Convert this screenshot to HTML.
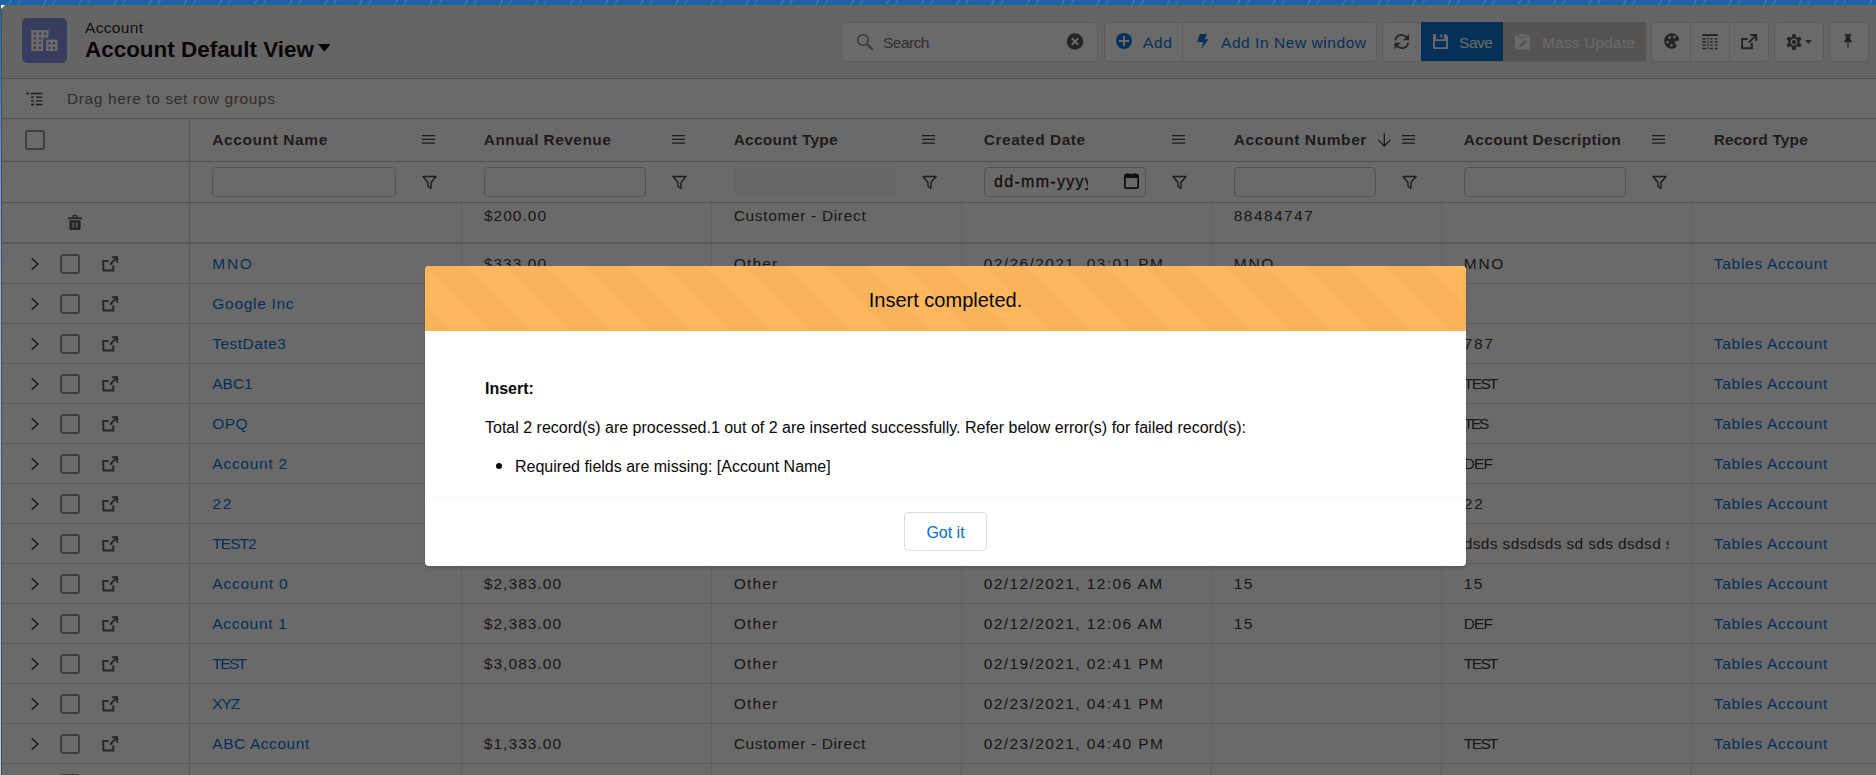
<!DOCTYPE html><html><head><meta charset="utf-8"><title>Account</title><style>*{box-sizing:border-box;margin:0;padding:0}
html,body{width:1876px;height:775px;overflow:hidden;background:#fff;font-family:"Liberation Sans",sans-serif;font-size:16px;color:#080707}
body{position:relative}
.abs{position:absolute}
#lstrip{position:absolute;left:0;top:0;width:2px;height:775px;background:linear-gradient(to bottom,#1e62a6 0,#3b78ba 70px,#6f95cc 160px,#9ab1dc 300px,#adc0e6 500px,#b5c5ea 775px)}
#strip{position:absolute;left:0;top:0;width:1876px;height:6px;background:#1e62a6 repeating-linear-gradient(118deg,rgba(255,255,255,0) 0 9px,rgba(255,255,255,.13) 9px 10.500px,rgba(255,255,255,0) 10.500px 17px,rgba(255,255,255,.09) 17px 18.500px,rgba(255,255,255,0) 18.500px 31px)}
#page{position:absolute;left:1px;top:5px;width:1875px;height:770px;border-left:1px solid #b9b5b1;background:#fff;overflow:hidden}
#hdbg{position:absolute;left:0;top:0;width:1876px;height:78px;background:#f3f2f2}
#dim{position:absolute;left:1px;top:5px;width:1875px;height:770px;background:rgba(8,7,7,.6)}
/* all children positioned in page coordinates via wrapper */
#wrap{position:absolute;left:-2px;top:-5px;width:1876px;height:775px}
.hl{position:absolute;left:0;width:1876px;height:1px;background:#bcc2d2}
#icon{position:absolute;left:22px;top:18px;width:45px;height:45px;border-radius:5px;background:#7f8de1}
#t1{position:absolute;left:85px;top:18px;font-size:16px;line-height:18px;color:#3e3e3c;white-space:nowrap}
#t2{position:absolute;left:85px;top:36px;font-size:22.4px;line-height:26px;font-weight:700;color:#080707;white-space:nowrap}
.btn{position:absolute;top:22px;height:40px;border:1px solid #dddbda;background:#fff;border-radius:4px}
.btxt{position:absolute;top:33px;font-size:16px;line-height:18px;color:#0070d2;white-space:nowrap}
.cb{position:absolute;width:20px;height:20px;border:2px solid #969492;border-radius:3px;background:#fff}
.hd{position:absolute;top:130px;font-weight:700;font-size:16px;line-height:18px;color:#3e3e3c;white-space:nowrap;letter-spacing:.25px}
.menu{position:absolute;top:134px;width:13px;height:11px}
.fin{position:absolute;top:167px;height:30px;border:1px solid #c9c9c9;border-radius:4px;background:#fff}
.fic{position:absolute;top:174.800px;width:15px;height:15px}
.row{position:absolute;left:0;width:1876px;height:40px;border-bottom:1px solid #d6dae6}
.chev{position:absolute;left:30.500px;top:14px;width:8px;height:12px}
.rcb{left:60px;top:10px}
.ext{position:absolute;left:101.500px;top:11.500px;width:17px;height:16px}
.cell{position:absolute;top:10.500px;font-size:15.500px;line-height:18px;white-space:nowrap;overflow:hidden;color:#333}
.tx{position:absolute;line-height:18px;white-space:nowrap}
.cell.lnk{color:#0070d2}
.vsep{position:absolute;top:203px;width:0;height:580px;border-left:1px dotted #d0d0d0}
.vsolid{position:absolute;left:189px;top:119px;width:1px;height:660px;background:#cfcfcf}
/* modal */
#modal{position:absolute;left:425px;top:266px;width:1041px;height:300px;background:#fff;border-radius:4px;overflow:hidden;box-shadow:0 2px 3px rgba(0,0,0,.16)}
#mh{position:absolute;left:0;top:0;width:100%;height:65px;background-color:#ffb75d;background-image:linear-gradient(45deg,rgba(0,0,0,.025) 25%,transparent 25%,transparent 50%,rgba(0,0,0,.025) 50%,rgba(0,0,0,.025) 75%,transparent 75%,transparent);background-size:80px 80px;text-align:center;font-size:20px;line-height:65px;padding-top:2px;color:#080707}
.mt{position:absolute;left:60px;margin-top:1px;font-size:16px;line-height:20px;color:#080707;white-space:nowrap}
#gotit{position:absolute;left:479px;top:246px;width:83px;height:39px;padding-top:2px;border:1px solid #dddbda;border-radius:4px;background:#fff;color:#0070d2;font-size:16px;line-height:35px;text-align:center}
</style></head><body>
<div id="lstrip"></div><div id="strip"></div>
<div id="page"><div id="wrap">
<!-- header --><div id="hdbg"></div>
<div id="icon"><svg viewBox="0 0 45 45" width="45" height="45"><path d="M9.300 12h17.200v7.700h-5.300V33H9.300z M24 21.800h11.600V33H24z" fill="#fff"/><g fill="#7f8de1"><circle cx="12.900" cy="15.600" r="1.250"/><circle cx="18" cy="15.600" r="1.250"/><circle cx="23" cy="15.600" r="1.250"/><circle cx="12.900" cy="20.400" r="1.250"/><circle cx="18" cy="20.400" r="1.250"/><circle cx="12.900" cy="24.900" r="1.250"/><circle cx="18" cy="24.900" r="1.250"/><circle cx="12.900" cy="29.700" r="1.250"/><circle cx="18" cy="29.700" r="1.250"/><circle cx="27.400" cy="25.200" r="1.250"/><circle cx="31.900" cy="25.200" r="1.250"/><circle cx="27.400" cy="30" r="1.250"/><circle cx="31.900" cy="30" r="1.250"/></g></svg></div>
<div class="tx" style="left:85px;top:19px;font-size:15.5px;font-weight:400;color:#181818;letter-spacing:0.331px">Account</div>
<div class="tx" style="left:85px;top:41px;font-size:22.4px;font-weight:700;color:#080707;letter-spacing:0.025px">Account Default View</div>
<svg class="abs" style="left:317.500px;top:44.300px" width="12.800" height="7.800" viewBox="0 0 12.800 7.800"><path d="M0 0h12.800L6.400 7.800z" fill="#080707"/></svg>
<!-- search -->
<div class="btn" style="left:841px;width:257px"></div>
<svg class="abs" style="left:856px;top:33px" width="18" height="18" viewBox="0 0 18 18"><circle cx="7" cy="7" r="5.3" fill="none" stroke="#8a8886" stroke-width="1.5"/><path d="M11 11l5.5 5.5" stroke="#8a8886" stroke-width="1.8"/></svg>
<div class="tx" style="left:883px;top:34px;font-size:15.5px;font-weight:400;color:#706e6b;letter-spacing:-0.525px">Search</div>
<svg class="abs" style="left:1066px;top:33px" width="18" height="18" viewBox="0 0 18 18"><circle cx="9" cy="8.500" r="8.200" fill="#54534f"/><path d="M5.800 5.300l6.400 6.400M12.200 5.300l-6.400 6.400" stroke="#fff" stroke-width="2"/></svg>
<!-- add group -->
<div class="btn" style="left:1104px;width:273px"></div>
<div class="abs" style="left:1182px;top:22px;width:1px;height:40px;background:#dddbda"></div>
<svg class="abs" style="left:1115px;top:32.300px" width="18" height="18" viewBox="0 0 18 18"><circle cx="9" cy="9" r="8" fill="#0070d2"/><path d="M9 3.800v10.400M3.800 9h10.400" stroke="#fff" stroke-width="1.900"/></svg>
<div class="tx" style="left:1143px;top:34px;font-size:15.5px;font-weight:400;color:#0070d2;letter-spacing:0.703px">Add</div>
<svg class="abs" style="left:1197px;top:34px" width="12" height="15" viewBox="0 0 12 15"><path d="M2.800 0h7.200L7.600 5.200H11.500L4.300 15l2-7H.200z" fill="#0070d2"/></svg>
<div class="tx" style="left:1221px;top:34px;font-size:15.5px;font-weight:400;color:#0070d2;letter-spacing:0.555px">Add In New window</div>
<!-- refresh/save/mass -->
<div class="btn" style="left:1382px;width:265px"></div>
<svg class="abs" style="left:1394px;top:34px" width="16" height="15" viewBox="0 0 16 15"><path d="M1.300 6.300A6.300 6.300 0 0 1 12.700 3.600M14.300 8.700A6.300 6.300 0 0 1 2.900 11.400" fill="none" stroke="#54534f" stroke-width="1.750"/><path d="M15.100 .1v6.200H8.900zM.5 14.900V8.700h6.200z" fill="#54534f"/></svg>
<div class="abs" style="left:1421px;top:22px;width:82px;height:39px;background:#0070d2"></div>
<svg class="abs" style="left:1433px;top:34px" width="15" height="15" viewBox="0 0 15 15"><path fill-rule="evenodd" fill="#fff" d="M1.300 0H12.800L15 2.200V13.700A1.300 1.300 0 0 1 13.700 15H1.300A1.300 1.300 0 0 1 0 13.700V1.300A1.300 1.300 0 0 1 1.300 0z M3.100 -.2V5.200H11V-.2z M1.900 7V13.200H13.100V7z"/><rect x="7.300" y=".5" width="2" height="3" fill="#fff"/></svg>
<div class="tx" style="left:1459px;top:34px;font-size:15.5px;font-weight:400;color:#ffffff;letter-spacing:-0.448px">Save</div>
<div class="abs" style="left:1503px;top:22px;width:143px;height:39px;background:#c9c7c5"></div>
<svg class="abs" style="left:1515px;top:33.800px" width="15" height="16" viewBox="0 0 15 16"><rect x="0" y="1.300" width="14.700" height="14.300" rx="1.300" fill="#fff"/><rect x="3.500" y="-.3" width="7.700" height="3.800" rx="1.500" fill="#fff" stroke="#c9c7c5" stroke-width="1"/><path d="M3.900 13.600l.7-2.600 5.300-5.100 1.900 1.900-5.300 5.100z" fill="#c9c7c5"/></svg>
<div class="tx" style="left:1542px;top:34px;font-size:15.5px;font-weight:400;color:#ffffff;letter-spacing:0.167px">Mass Update</div>
<!-- icon group -->
<div class="btn" style="left:1651px;width:118px"></div>
<div class="abs" style="left:1690px;top:22px;width:1px;height:40px;background:#dddbda"></div>
<div class="abs" style="left:1729px;top:22px;width:1px;height:40px;background:#dddbda"></div>
<svg class="abs" style="left:1663.600px;top:33.400px" width="16" height="16" viewBox="0 0 16 16"><path d="M7.800 .3A7.700 7.700 0 0 0 7.800 15.700C10 15.700 11.600 15 12.800 13.300C13.600 12 10.500 11.300 10.700 9.400C10.900 7.700 13.200 8.400 15.400 7.300A7.700 7.700 0 0 0 7.800 .3z" fill="#54534f"/><g fill="#fff"><circle cx="5.600" cy="4.400" r="1.350"/><circle cx="10.400" cy="3.800" r="1.350"/><circle cx="3.500" cy="9.100" r="1.350"/><circle cx="7.500" cy="12.300" r="1.350"/></g></svg>
<svg class="abs" style="left:1702px;top:33.800px" width="16" height="16" viewBox="0 0 16 16"><path d="M.2 .1h15.600v1.900H.2z" fill="#54534f"/><path d="M.3 4.800h4M7.900 4.800h2.800M12.700 4.800h2.800M.3 8h4M7.900 8h2.800M12.700 8h2.800M.3 11.200h4M7.900 11.200h2.800M12.700 11.200h2.800M.3 14.500h4M7.900 14.500h2.800M12.700 14.500h2.800" stroke="#54534f" stroke-width="1.300"/><path d="M6.100 2.500V15.200" stroke="#54534f" stroke-width=".8"/></svg>
<svg class="abs" style="left:1740.800px;top:33.800px" width="17" height="16" viewBox="0 0 17 16"><path d="M6.800 5H1.100v9.300h9.700V8.700" fill="none" stroke="#54534f" stroke-width="2"/><path d="M9.300 1.100h5.900V7M15.200 1.100L7.700 8.600" fill="none" stroke="#54534f" stroke-width="2"/></svg>
<div class="btn" style="left:1774px;width:50px"></div>
<svg class="abs" style="left:1786px;top:33.500px" width="16" height="16" viewBox="0 0 16 16"><g transform="translate(8 8)"><g fill="#54534f"><rect x="-1.900" y="-7.900" width="3.800" height="15.800" rx="1" transform="rotate(0)"/><rect x="-1.900" y="-7.900" width="3.800" height="15.800" rx="1" transform="rotate(60)"/><rect x="-1.900" y="-7.900" width="3.800" height="15.800" rx="1" transform="rotate(120)"/><circle r="5.700"/></g><circle r="2.800" fill="none" stroke="#fff" stroke-width="1.300"/></g></svg>
<svg class="abs" style="left:1804.600px;top:40px" width="7" height="4" viewBox="0 0 7 4"><path d="M0 0h7L3.500 4z" fill="#54534f"/></svg>
<div class="btn" style="left:1829px;width:40px"></div>
<svg class="abs" style="left:1844.100px;top:34.200px" width="8" height="14" viewBox="0 0 8 14"><rect x=".9" y="0" width="6.200" height="1.800" rx=".6" fill="#54534f"/><path d="M1.700 1.500h4.600l.2 4.200c.9.500 1.500 1.300 1.500 2.500H0c0-1.200.6-2 1.500-2.500z" fill="#54534f"/><path d="M3.350 8h1.300v5l-.65 1-.65-1z" fill="#54534f"/></svg>
<div class="hl" style="top:78px;background:#c2c2c2;height:1px"></div>
<!-- group bar -->
<svg class="abs" style="left:26px;top:92px" width="17" height="14" viewBox="0 0 17 14"><path d="M0 1.500h3M5 1.500h11.300M5 5.100h3M10 5.100h6.300M5 8.800h3M10 8.800h6.300M5 12.500h3M10 12.500h6.300" stroke="#3a3a3a" stroke-width="1.300"/></svg>
<div class="tx" style="left:67px;top:89.5px;font-size:15.5px;font-weight:400;color:#6b6b6b;letter-spacing:0.611px">Drag here to set row groups</div>
<div class="hl" style="top:118px"></div>
<!-- col header -->
<span class="cb" style="left:25px;top:130px"></span>
<div class="tx" style="left:212.3px;top:130.5px;font-size:15.5px;font-weight:700;color:#3e3e3c;letter-spacing:0.588px">Account Name</div>
<div class="tx" style="left:483.8px;top:130.5px;font-size:15.5px;font-weight:700;color:#3e3e3c;letter-spacing:0.427px">Annual Revenue</div>
<div class="tx" style="left:733.7px;top:130.5px;font-size:15.5px;font-weight:700;color:#3e3e3c;letter-spacing:0.241px">Account Type</div>
<div class="tx" style="left:983.7px;top:130.5px;font-size:15.5px;font-weight:700;color:#3e3e3c;letter-spacing:0.534px">Created Date</div>
<div class="tx" style="left:1233.8px;top:130.5px;font-size:15.5px;font-weight:700;color:#3e3e3c;letter-spacing:0.594px">Account Number</div>
<div class="tx" style="left:1463.8px;top:130.5px;font-size:15.5px;font-weight:700;color:#3e3e3c;letter-spacing:0.301px">Account Description</div>
<div class="tx" style="left:1713.8px;top:130.5px;font-size:15.5px;font-weight:700;color:#3e3e3c;letter-spacing:0.125px">Record Type</div>
<svg class="abs" style="left:1377px;top:133px" width="14" height="14" viewBox="0 0 14 14"><path d="M7.300 .4V13M1.100 6.600L7.300 13l6.300-6.400" fill="none" stroke="#3a3a3a" stroke-width="1.300"/></svg>
<svg class="menu" style="left:422px" viewBox="0 0 13 11"><path d="M0 1.500h13M0 5.400h13M0 9.200h13" stroke="#3a3a3a" stroke-width="1.250"/></svg>
<svg class="menu" style="left:672px" viewBox="0 0 13 11"><path d="M0 1.500h13M0 5.400h13M0 9.200h13" stroke="#3a3a3a" stroke-width="1.250"/></svg>
<svg class="menu" style="left:922px" viewBox="0 0 13 11"><path d="M0 1.500h13M0 5.400h13M0 9.200h13" stroke="#3a3a3a" stroke-width="1.250"/></svg>
<svg class="menu" style="left:1172px" viewBox="0 0 13 11"><path d="M0 1.500h13M0 5.400h13M0 9.200h13" stroke="#3a3a3a" stroke-width="1.250"/></svg>
<svg class="menu" style="left:1402px" viewBox="0 0 13 11"><path d="M0 1.500h13M0 5.400h13M0 9.200h13" stroke="#3a3a3a" stroke-width="1.250"/></svg>
<svg class="menu" style="left:1652px" viewBox="0 0 13 11"><path d="M0 1.500h13M0 5.400h13M0 9.200h13" stroke="#3a3a3a" stroke-width="1.250"/></svg>
<div class="hl" style="top:161px"></div>
<!-- filter row -->
<div class="fin" style="left:212px;width:184px"></div>
<div class="fin" style="left:484px;width:162px"></div>
<div class="fin" style="left:734px;width:162px;background:#f4f4f4;border-color:#fbfbfb"></div>
<div class="fin" style="left:984px;width:162px"></div>
<div class="abs" style="left:994px;top:173px;font-size:16px;line-height:18px;color:#1c1c1c;-webkit-text-stroke:.3px #1c1c1c;letter-spacing:1.300px;width:94px;overflow:hidden;white-space:nowrap">dd-mm-yyyy</div>
<svg class="abs" style="left:1124px;top:172.800px" width="15" height="16" viewBox="0 0 15 16"><rect x=".9" y="1.700" width="13.200" height="13.400" rx="1.200" fill="none" stroke="#222" stroke-width="1.800"/><path d="M.9 1.700h13.200v3.300H.9z" fill="#222"/><path d="M3.700 .2v2M11.300 .2v2" stroke="#222" stroke-width="1.800"/></svg>
<div class="fin" style="left:1234px;width:142px"></div>
<div class="fin" style="left:1464px;width:162px"></div>
<svg class="fic" style="left:422px" viewBox="0 0 15 15"><path d="M1 1.500h13L9 7.500v6l-3-2v-4z" fill="none" stroke="#3e3e3c" stroke-width="1.400" stroke-linejoin="round"/></svg>
<svg class="fic" style="left:672px" viewBox="0 0 15 15"><path d="M1 1.500h13L9 7.500v6l-3-2v-4z" fill="none" stroke="#3e3e3c" stroke-width="1.400" stroke-linejoin="round"/></svg>
<svg class="fic" style="left:922px" viewBox="0 0 15 15"><path d="M1 1.500h13L9 7.500v6l-3-2v-4z" fill="none" stroke="#3e3e3c" stroke-width="1.400" stroke-linejoin="round"/></svg>
<svg class="fic" style="left:1172px" viewBox="0 0 15 15"><path d="M1 1.500h13L9 7.500v6l-3-2v-4z" fill="none" stroke="#3e3e3c" stroke-width="1.400" stroke-linejoin="round"/></svg>
<svg class="fic" style="left:1402px" viewBox="0 0 15 15"><path d="M1 1.500h13L9 7.500v6l-3-2v-4z" fill="none" stroke="#3e3e3c" stroke-width="1.400" stroke-linejoin="round"/></svg>
<svg class="fic" style="left:1652px" viewBox="0 0 15 15"><path d="M1 1.500h13L9 7.500v6l-3-2v-4z" fill="none" stroke="#3e3e3c" stroke-width="1.400" stroke-linejoin="round"/></svg>
<div class="hl" style="top:202px"></div>
<!-- pinned row -->
<svg class="abs" style="left:68px;top:215px" width="14" height="15" viewBox="0 0 14 15"><path d="M5 2.500V1.300a.6.600 0 0 1 .6-.6h2.800a.6.600 0 0 1 .6.600v1.200" fill="none" stroke="#54534f" stroke-width="1.300"/><path d="M0 2.300h14v1.900H0z" fill="#54534f"/><path d="M1.400 5.300h11.200v8.300a1.300 1.300 0 0 1-1.300 1.300H2.700a1.300 1.300 0 0 1-1.300-1.300z" fill="#54534f"/><path d="M5.200 7.500v5M8.800 7.500v5" stroke="#fff" stroke-width="1.300"/></svg>
<div class="tx" style="left:484px;top:206.5px;font-size:15.5px;font-weight:400;color:#333333;letter-spacing:0.995px">$200.00</div>
<div class="tx" style="left:733.7px;top:206.5px;font-size:15.5px;font-weight:400;color:#333333;letter-spacing:0.66px">Customer - Direct</div>
<div class="tx" style="left:1233.8px;top:206.5px;font-size:15.5px;font-weight:400;color:#333333;letter-spacing:1.433px">88484747</div>
<div class="hl" style="top:242px;height:2px;background:#cbd2e2"></div>

<div id="rows">
<div class="row" style="top:244px">
<svg class="chev" viewBox="0 0 8 12"><path d="M.7 .5l6.300 5.500-6.300 5.500" fill="none" stroke="#2e2e2e" stroke-width="1.400"/></svg>
<span class="cb rcb"></span>
<svg class="ext" viewBox="0 0 17 16"><path d="M6.700 5H1.300v9.600h10V9.300" fill="none" stroke="#5c5b59" stroke-width="2"/><path d="M9.800 1.300h5.300V6.800M15.100 1.300L8.200 8.500" fill="none" stroke="#5c5b59" stroke-width="2"/></svg>
<span class="cell lnk" style="left:212.3px;width:226.7px;letter-spacing:1.714px">MNO</span>
<span class="cell" style="left:483.8px;width:205.2px;letter-spacing:1.041px">$333.00</span>
<span class="cell" style="left:733.7px;width:205.29999999999995px;letter-spacing:1.184px">Other</span>
<span class="cell" style="left:983.7px;width:205.29999999999995px;letter-spacing:1.411px">02/26/2021, 03:01 PM</span>
<span class="cell" style="left:1233.8px;width:185.20000000000005px;letter-spacing:1.714px">MNO</span>
<span class="cell" style="left:1463.8px;width:205.20000000000005px;letter-spacing:1.714px">MNO</span>
<span class="cell lnk" style="left:1713.8px;width:205.20000000000005px;letter-spacing:0.71px">Tables Account</span>
</div>
<div class="row" style="top:284px">
<svg class="chev" viewBox="0 0 8 12"><path d="M.7 .5l6.300 5.500-6.300 5.500" fill="none" stroke="#2e2e2e" stroke-width="1.400"/></svg>
<span class="cb rcb"></span>
<svg class="ext" viewBox="0 0 17 16"><path d="M6.700 5H1.300v9.600h10V9.300" fill="none" stroke="#5c5b59" stroke-width="2"/><path d="M9.800 1.300h5.300V6.800M15.100 1.300L8.200 8.500" fill="none" stroke="#5c5b59" stroke-width="2"/></svg>
<span class="cell lnk" style="left:212.3px;width:226.7px;letter-spacing:0.703px">Google Inc</span>
</div>
<div class="row" style="top:324px">
<svg class="chev" viewBox="0 0 8 12"><path d="M.7 .5l6.300 5.500-6.300 5.500" fill="none" stroke="#2e2e2e" stroke-width="1.400"/></svg>
<span class="cb rcb"></span>
<svg class="ext" viewBox="0 0 17 16"><path d="M6.700 5H1.300v9.600h10V9.300" fill="none" stroke="#5c5b59" stroke-width="2"/><path d="M9.800 1.300h5.300V6.800M15.100 1.300L8.200 8.500" fill="none" stroke="#5c5b59" stroke-width="2"/></svg>
<span class="cell lnk" style="left:212.3px;width:226.7px;letter-spacing:0.475px">TestDate3</span>
<span class="cell" style="left:1463.8px;width:205.20000000000005px;letter-spacing:1.562px">787</span>
<span class="cell lnk" style="left:1713.8px;width:205.20000000000005px;letter-spacing:0.71px">Tables Account</span>
</div>
<div class="row" style="top:364px">
<svg class="chev" viewBox="0 0 8 12"><path d="M.7 .5l6.300 5.500-6.300 5.500" fill="none" stroke="#2e2e2e" stroke-width="1.400"/></svg>
<span class="cb rcb"></span>
<svg class="ext" viewBox="0 0 17 16"><path d="M6.700 5H1.300v9.600h10V9.300" fill="none" stroke="#5c5b59" stroke-width="2"/><path d="M9.800 1.300h5.300V6.800M15.100 1.300L8.200 8.500" fill="none" stroke="#5c5b59" stroke-width="2"/></svg>
<span class="cell lnk" style="left:212.3px;width:226.7px;letter-spacing:-0.033px">ABC1</span>
<span class="cell" style="left:1463.8px;width:205.20000000000005px;letter-spacing:-1.608px">TEST</span>
<span class="cell lnk" style="left:1713.8px;width:205.20000000000005px;letter-spacing:0.71px">Tables Account</span>
</div>
<div class="row" style="top:404px">
<svg class="chev" viewBox="0 0 8 12"><path d="M.7 .5l6.300 5.500-6.300 5.500" fill="none" stroke="#2e2e2e" stroke-width="1.400"/></svg>
<span class="cb rcb"></span>
<svg class="ext" viewBox="0 0 17 16"><path d="M6.700 5H1.300v9.600h10V9.300" fill="none" stroke="#5c5b59" stroke-width="2"/><path d="M9.800 1.300h5.300V6.800M15.100 1.300L8.200 8.500" fill="none" stroke="#5c5b59" stroke-width="2"/></svg>
<span class="cell lnk" style="left:212.3px;width:226.7px;letter-spacing:0.423px">OPQ</span>
<span class="cell" style="left:1463.8px;width:205.20000000000005px;letter-spacing:-2.328px">TES</span>
<span class="cell lnk" style="left:1713.8px;width:205.20000000000005px;letter-spacing:0.71px">Tables Account</span>
</div>
<div class="row" style="top:444px">
<svg class="chev" viewBox="0 0 8 12"><path d="M.7 .5l6.300 5.500-6.300 5.500" fill="none" stroke="#2e2e2e" stroke-width="1.400"/></svg>
<span class="cb rcb"></span>
<svg class="ext" viewBox="0 0 17 16"><path d="M6.700 5H1.300v9.600h10V9.300" fill="none" stroke="#5c5b59" stroke-width="2"/><path d="M9.800 1.300h5.300V6.800M15.100 1.300L8.200 8.500" fill="none" stroke="#5c5b59" stroke-width="2"/></svg>
<span class="cell lnk" style="left:212.3px;width:226.7px;letter-spacing:0.745px">Account 2</span>
<span class="cell" style="left:1463.8px;width:205.20000000000005px;letter-spacing:-0.95px">DEF</span>
<span class="cell lnk" style="left:1713.8px;width:205.20000000000005px;letter-spacing:0.71px">Tables Account</span>
</div>
<div class="row" style="top:484px">
<svg class="chev" viewBox="0 0 8 12"><path d="M.7 .5l6.300 5.500-6.300 5.500" fill="none" stroke="#2e2e2e" stroke-width="1.400"/></svg>
<span class="cb rcb"></span>
<svg class="ext" viewBox="0 0 17 16"><path d="M6.700 5H1.300v9.600h10V9.300" fill="none" stroke="#5c5b59" stroke-width="2"/><path d="M9.800 1.300h5.300V6.800M15.100 1.300L8.200 8.500" fill="none" stroke="#5c5b59" stroke-width="2"/></svg>
<span class="cell lnk" style="left:212.3px;width:226.7px;letter-spacing:1.95px">22</span>
<span class="cell" style="left:1463.8px;width:205.20000000000005px;letter-spacing:1.95px">22</span>
<span class="cell lnk" style="left:1713.8px;width:205.20000000000005px;letter-spacing:0.71px">Tables Account</span>
</div>
<div class="row" style="top:524px">
<svg class="chev" viewBox="0 0 8 12"><path d="M.7 .5l6.300 5.500-6.300 5.500" fill="none" stroke="#2e2e2e" stroke-width="1.400"/></svg>
<span class="cb rcb"></span>
<svg class="ext" viewBox="0 0 17 16"><path d="M6.700 5H1.300v9.600h10V9.300" fill="none" stroke="#5c5b59" stroke-width="2"/><path d="M9.800 1.300h5.300V6.800M15.100 1.300L8.200 8.500" fill="none" stroke="#5c5b59" stroke-width="2"/></svg>
<span class="cell lnk" style="left:212.3px;width:226.7px;letter-spacing:-0.984px">TEST2</span>
<span class="cell" style="left:1463.8px;width:205.20000000000005px;letter-spacing:0.346px">dsds sdsdsds sd sds dsdsd sdsd sdsds</span>
<span class="cell lnk" style="left:1713.8px;width:205.20000000000005px;letter-spacing:0.71px">Tables Account</span>
</div>
<div class="row" style="top:564px">
<svg class="chev" viewBox="0 0 8 12"><path d="M.7 .5l6.300 5.500-6.300 5.500" fill="none" stroke="#2e2e2e" stroke-width="1.400"/></svg>
<span class="cb rcb"></span>
<svg class="ext" viewBox="0 0 17 16"><path d="M6.700 5H1.300v9.600h10V9.300" fill="none" stroke="#5c5b59" stroke-width="2"/><path d="M9.800 1.300h5.300V6.800M15.100 1.300L8.200 8.500" fill="none" stroke="#5c5b59" stroke-width="2"/></svg>
<span class="cell lnk" style="left:212.3px;width:226.7px;letter-spacing:0.808px">Account 0</span>
<span class="cell" style="left:483.8px;width:205.2px;letter-spacing:1.041px">$2,383.00</span>
<span class="cell" style="left:733.7px;width:205.29999999999995px;letter-spacing:1.184px">Other</span>
<span class="cell" style="left:983.7px;width:205.29999999999995px;letter-spacing:1.411px">02/12/2021, 12:06 AM</span>
<span class="cell" style="left:1233.8px;width:185.20000000000005px;letter-spacing:1.25px">15</span>
<span class="cell" style="left:1463.8px;width:205.20000000000005px;letter-spacing:1.25px">15</span>
<span class="cell lnk" style="left:1713.8px;width:205.20000000000005px;letter-spacing:0.71px">Tables Account</span>
</div>
<div class="row" style="top:604px">
<svg class="chev" viewBox="0 0 8 12"><path d="M.7 .5l6.300 5.500-6.300 5.500" fill="none" stroke="#2e2e2e" stroke-width="1.400"/></svg>
<span class="cb rcb"></span>
<svg class="ext" viewBox="0 0 17 16"><path d="M6.700 5H1.300v9.600h10V9.300" fill="none" stroke="#5c5b59" stroke-width="2"/><path d="M9.800 1.300h5.300V6.800M15.100 1.300L8.200 8.500" fill="none" stroke="#5c5b59" stroke-width="2"/></svg>
<span class="cell lnk" style="left:212.3px;width:226.7px;letter-spacing:0.708px">Account 1</span>
<span class="cell" style="left:483.8px;width:205.2px;letter-spacing:1.041px">$2,383.00</span>
<span class="cell" style="left:733.7px;width:205.29999999999995px;letter-spacing:1.184px">Other</span>
<span class="cell" style="left:983.7px;width:205.29999999999995px;letter-spacing:1.411px">02/12/2021, 12:06 AM</span>
<span class="cell" style="left:1233.8px;width:185.20000000000005px;letter-spacing:1.25px">15</span>
<span class="cell" style="left:1463.8px;width:205.20000000000005px;letter-spacing:-0.95px">DEF</span>
<span class="cell lnk" style="left:1713.8px;width:205.20000000000005px;letter-spacing:0.71px">Tables Account</span>
</div>
<div class="row" style="top:644px">
<svg class="chev" viewBox="0 0 8 12"><path d="M.7 .5l6.300 5.500-6.300 5.500" fill="none" stroke="#2e2e2e" stroke-width="1.400"/></svg>
<span class="cb rcb"></span>
<svg class="ext" viewBox="0 0 17 16"><path d="M6.700 5H1.300v9.600h10V9.300" fill="none" stroke="#5c5b59" stroke-width="2"/><path d="M9.800 1.300h5.300V6.800M15.100 1.300L8.200 8.500" fill="none" stroke="#5c5b59" stroke-width="2"/></svg>
<span class="cell lnk" style="left:212.3px;width:226.7px;letter-spacing:-1.608px">TEST</span>
<span class="cell" style="left:483.8px;width:205.2px;letter-spacing:1.041px">$3,083.00</span>
<span class="cell" style="left:733.7px;width:205.29999999999995px;letter-spacing:1.184px">Other</span>
<span class="cell" style="left:983.7px;width:205.29999999999995px;letter-spacing:1.411px">02/19/2021, 02:41 PM</span>
<span class="cell" style="left:1463.8px;width:205.20000000000005px;letter-spacing:-1.608px">TEST</span>
<span class="cell lnk" style="left:1713.8px;width:205.20000000000005px;letter-spacing:0.71px">Tables Account</span>
</div>
<div class="row" style="top:684px">
<svg class="chev" viewBox="0 0 8 12"><path d="M.7 .5l6.300 5.500-6.300 5.500" fill="none" stroke="#2e2e2e" stroke-width="1.400"/></svg>
<span class="cb rcb"></span>
<svg class="ext" viewBox="0 0 17 16"><path d="M6.700 5H1.300v9.600h10V9.300" fill="none" stroke="#5c5b59" stroke-width="2"/><path d="M9.800 1.300h5.300V6.800M15.100 1.300L8.200 8.500" fill="none" stroke="#5c5b59" stroke-width="2"/></svg>
<span class="cell lnk" style="left:212.3px;width:226.7px;letter-spacing:-1.078px">XYZ</span>
<span class="cell" style="left:733.7px;width:205.29999999999995px;letter-spacing:1.184px">Other</span>
<span class="cell" style="left:983.7px;width:205.29999999999995px;letter-spacing:1.411px">02/23/2021, 04:41 PM</span>
<span class="cell lnk" style="left:1713.8px;width:205.20000000000005px;letter-spacing:0.71px">Tables Account</span>
</div>
<div class="row" style="top:724px">
<svg class="chev" viewBox="0 0 8 12"><path d="M.7 .5l6.300 5.500-6.300 5.500" fill="none" stroke="#2e2e2e" stroke-width="1.400"/></svg>
<span class="cb rcb"></span>
<svg class="ext" viewBox="0 0 17 16"><path d="M6.700 5H1.300v9.600h10V9.300" fill="none" stroke="#5c5b59" stroke-width="2"/><path d="M9.800 1.300h5.300V6.800M15.100 1.300L8.200 8.500" fill="none" stroke="#5c5b59" stroke-width="2"/></svg>
<span class="cell lnk" style="left:212.3px;width:226.7px;letter-spacing:0.567px">ABC Account</span>
<span class="cell" style="left:483.8px;width:205.2px;letter-spacing:1.041px">$1,333.00</span>
<span class="cell" style="left:733.7px;width:205.29999999999995px;letter-spacing:0.641px">Customer - Direct</span>
<span class="cell" style="left:983.7px;width:205.29999999999995px;letter-spacing:1.411px">02/23/2021, 04:40 PM</span>
<span class="cell" style="left:1463.8px;width:205.20000000000005px;letter-spacing:-1.608px">TEST</span>
<span class="cell lnk" style="left:1713.8px;width:205.20000000000005px;letter-spacing:0.71px">Tables Account</span>
</div>
<div class="row" style="top:764px">
<svg class="chev" viewBox="0 0 8 12"><path d="M.7 .5l6.300 5.500-6.300 5.500" fill="none" stroke="#2e2e2e" stroke-width="1.400"/></svg>
<span class="cb rcb"></span>
<svg class="ext" viewBox="0 0 17 16"><path d="M6.700 5H1.300v9.600h10V9.300" fill="none" stroke="#5c5b59" stroke-width="2"/><path d="M9.800 1.300h5.300V6.800M15.100 1.300L8.200 8.500" fill="none" stroke="#5c5b59" stroke-width="2"/></svg>
</div>
</div>
<div class="vsep" style="left:461px"></div>
<div class="vsep" style="left:711px"></div>
<div class="vsep" style="left:961px"></div>
<div class="vsep" style="left:1211px"></div>
<div class="vsep" style="left:1441px"></div>
<div class="vsep" style="left:1691px"></div>
<div class="vsolid"></div>
</div></div>
<div id="dim"></div>
<div class="abs" style="left:1px;top:5px;width:4px;height:4px;background:linear-gradient(135deg,#fff 45%,rgba(255,255,255,0) 55%)"></div>
<div id="modal">
<div id="mh">Insert completed.</div>
<div class="mt" style="top:112px;font-weight:700">Insert:</div>
<div class="mt" style="top:151px">Total 2 record(s) are processed.1 out of 2 are inserted successfully. Refer below error(s) for failed record(s):</div>
<div class="abs" style="left:71px;top:197px;width:6px;height:6px;border-radius:50%;background:#080707"></div>
<div class="mt" style="left:90px;top:190px">Required fields are missing: [Account Name]</div>
<div class="abs" style="left:0;top:230px;width:100%;height:1px;background:#fafafa"></div>
<div id="gotit">Got it</div>
</div>

</body></html>
